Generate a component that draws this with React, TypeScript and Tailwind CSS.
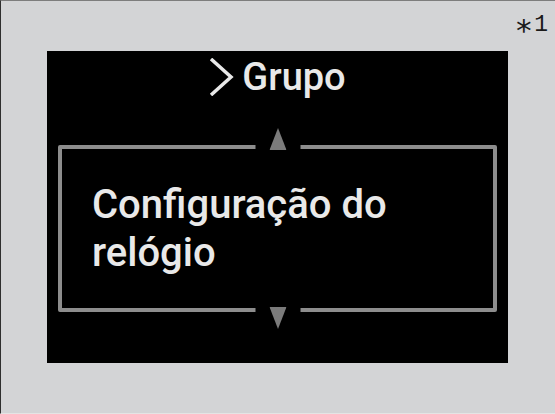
import React from "react";

const font = { fontFamily: 'Roboto, "Liberation Sans", Arial, sans-serif' };

function Chevron() {
    return (
        <svg width="26" height="38" viewBox="0 0 26 38" className="shrink-0">
            <polyline points="2,1 22,19 2,37" fill="none" stroke="#e9e9e9" strokeWidth="3.5" strokeLinejoin="miter" />
        </svg>
    );
}

function Arrow({ up }: { up?: boolean }) {
    return (
        <svg width="17" height="22" viewBox="0 0 17 22">
            <polygon points={up ? "8.5,0 17,22 0,22" : "0,0 17,0 8.5,22"} fill="#7b7b7b" />
        </svg>
    );
}

export default function App() {
    return (
        <div
            className="w-[555px] h-[414px] bg-[#d3d4d6] border-t border-t-[#7d7d7d] border-l border-l-[#2e2e2e] border-b border-b-[#e4e4e4] flex flex-col overflow-hidden"
            style={font}
        >
            {/* footnote marker */}
            <div className="h-[50px] flex justify-end pr-[7px] pt-[12px]">
                <div className="flex items-center h-[24px] text-[#1a1a1a]" style={{ fontFamily: '"DejaVu Sans Mono", monospace' }}>
                    <span className="text-[31px] leading-none translate-y-[5px]">*</span>
                    <span className="text-[23px] leading-none ml-[1px]" style={{ fontFamily: '"Liberation Mono", monospace' }}>1</span>
                </div>
            </div>

            {/* screen */}
            <div className="ml-[46px] w-[461px] h-[312px] bg-black flex flex-col px-[11px]">
                <div className="flex items-center justify-center pt-[4px] h-[44px] gap-[7px] mt-[2px]">
                    <Chevron />
                    <span className="text-[38px] leading-[44px] font-medium text-[#e9e9e9]">Grupo</span>
                </div>

                <div className="relative mt-[48px] h-[167px] border-[4px] border-[#8d8d8d] rounded-[2px]">
                    <div className="absolute left-1/2 -translate-x-1/2 -top-[21px] w-[45px] h-[25px] bg-black flex justify-center">
                        <Arrow up />
                    </div>
                    <div className="pl-[30px] pt-[32px] text-[40px] leading-[48px] font-medium text-[#e9e9e9]">
                        Configuração do
                        <br />
                        relógio
                    </div>
                    <div className="absolute left-1/2 -translate-x-1/2 -bottom-[21px] w-[45px] h-[25px] bg-black flex justify-center items-end">
                        <Arrow />
                    </div>
                </div>
            </div>
        </div>
    );
}
